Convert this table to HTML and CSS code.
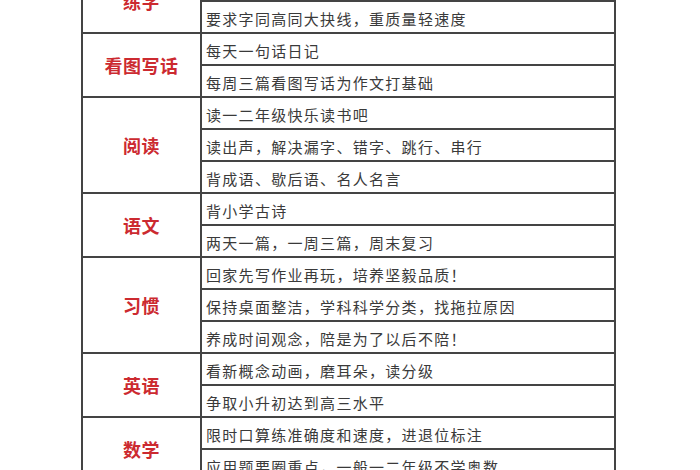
FILE: index.html
```html
<!DOCTYPE html>
<html lang="zh">
<head>
<meta charset="utf-8">
<link rel="stylesheet" href="styles.css">
</head>
<body>
<table class="plan">
  <tbody>
    <tr><td class="cat" rowspan="2">练字</td><td class="item"></td></tr>
    <tr><td class="item">要求字同高同大抉线，重质量轻速度</td></tr>
    <tr><td class="cat" rowspan="2">看图写话</td><td class="item">每天一句话日记</td></tr>
    <tr><td class="item">每周三篇看图写话为作文打基础</td></tr>
    <tr><td class="cat" rowspan="3">阅读</td><td class="item">读一二年级快乐读书吧</td></tr>
    <tr><td class="item">读出声，解决漏字、错字、跳行、串行</td></tr>
    <tr><td class="item">背成语、歇后语、名人名言</td></tr>
    <tr><td class="cat" rowspan="2">语文</td><td class="item">背小学古诗</td></tr>
    <tr><td class="item">两天一篇，一周三篇，周末复习</td></tr>
    <tr><td class="cat" rowspan="3">习惯</td><td class="item">回家先写作业再玩，培养坚毅品质！</td></tr>
    <tr><td class="item">保持桌面整洁，学科科学分类，找拖拉原因</td></tr>
    <tr><td class="item">养成时间观念，陪是为了以后不陪！</td></tr>
    <tr><td class="cat" rowspan="2">英语</td><td class="item">看新概念动画，磨耳朵，读分级</td></tr>
    <tr><td class="item">争取小升初达到高三水平</td></tr>
    <tr><td class="cat" rowspan="2">数学</td><td class="item">限时口算练准确度和速度，进退位标注</td></tr>
    <tr><td class="item">应用题要圈重点，一般一二年级不学奥数</td></tr>
  </tbody>
</table>
</body>
</html>
```

FILE: styles.css
```css
html, body {
  margin: 0;
  padding: 0;
  background: #ffffff;
}
body {
  width: 700px;
  height: 470px;
  overflow: hidden;
  font-family: "Noto Sans CJK SC", "Noto Sans", sans-serif;
}
.plan {
  border-collapse: collapse;
  margin-top: -32px;
  margin-left: 81px;
  width: 535px;
  table-layout: fixed;
}
.plan tr {
  height: 32px;
}
.plan td {
  border: 2px solid #444444;
  padding: 0;
}
.cat {
  width: 117px;
  text-align: center;
  color: #cc2a30;
  font-size: 18px;
  font-weight: 700;
  letter-spacing: 0.5px;
}
.item {
  color: #3a3a3a;
  font-size: 15px;
  letter-spacing: 1.3px;
  padding: 3px 0 0 4px !important;
  line-height: 26px;
  white-space: nowrap;
}
```
